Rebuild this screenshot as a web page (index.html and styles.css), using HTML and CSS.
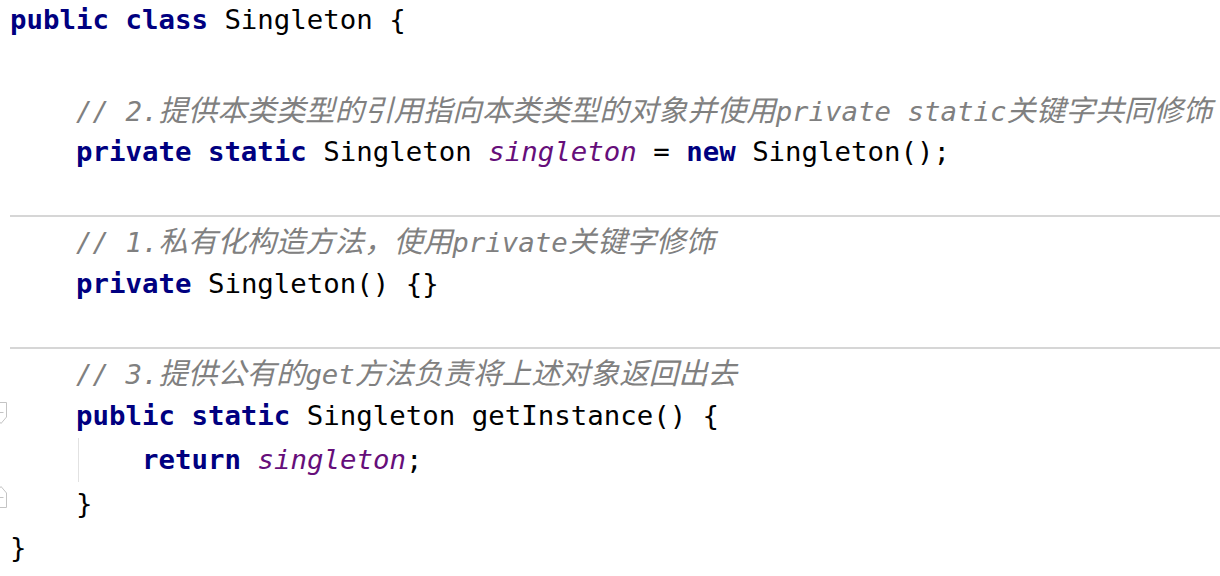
FILE: index.html
```html
<!DOCTYPE html>
<html lang="zh">
<head>
<meta charset="utf-8">
<title>Singleton</title>
<link rel="stylesheet" href="styles.css">
</head>
<body>
<div class="editor">
  <div class="line"><span class="gutter"></span><span class="code"><span class="kw">public class</span> Singleton {</span></div>
  <div class="line"><span class="gutter"></span><span class="code"> </span></div>
  <div class="line"><span class="gutter"></span><span class="code">    <span class="cm">// 2.<span class="zh">提供本类类型的引用指向本类类型的对象并使用</span>private static<span class="zh">关键字共同修饰</span></span></span></div>
  <div class="line"><span class="gutter"></span><span class="code">    <span class="kw">private static</span> Singleton <span class="fld">singleton</span> = <span class="kw">new</span> Singleton();</span></div>
  <div class="line short"><span class="gutter"></span><span class="code"> </span></div>
  <div class="line sep"><span class="gutter"></span><span class="code">    <span class="cm">// 1.<span class="zh">私有化构造方法，使用</span>private<span class="zh">关键字修饰</span></span></span></div>
  <div class="line"><span class="gutter"></span><span class="code">    <span class="kw">private</span> Singleton() {}</span></div>
  <div class="line short"><span class="gutter"></span><span class="code"> </span></div>
  <div class="line sep"><span class="gutter"></span><span class="code">    <span class="cm">// 3.<span class="zh">提供公有的</span>get<span class="zh">方法负责将上述对象返回出去</span></span></span></div>
  <div class="line"><span class="gutter"><svg class="fold" width="14" height="24" viewBox="0 0 14 24"><path d="M0.5 0.5 H11.5 V15 L6 21.5 L0.5 15 Z" fill="#fff" stroke="#c4c4c4" stroke-width="1"/><path d="M3.5 10.5 H8.5" stroke="#c4c4c4" stroke-width="1"/></svg></span><span class="code">    <span class="kw">public static</span> Singleton getInstance() {</span></div>
  <div class="line"><span class="gutter"></span><span class="code"><span class="ind">    </span><span class="guide">    </span><span class="kw">return</span> <span class="fld">singleton</span>;</span></div>
  <div class="line"><span class="gutter"><svg class="fold up" width="14" height="24" viewBox="0 0 14 24"><path d="M0.5 23.5 H11.5 V9 L6 2.5 L0.5 9 Z" fill="#fff" stroke="#c4c4c4" stroke-width="1"/><path d="M3.5 13.5 H8.5" stroke="#c4c4c4" stroke-width="1"/></svg></span><span class="code">    }</span></div>
  <div class="line"><span class="gutter"></span><span class="code">}</span></div>
</div>
</body>
</html>
```

FILE: styles.css
```css
html, body {
  margin: 0;
  padding: 0;
  background: #ffffff;
}

body {
  width: 1220px;
  height: 576px;
  overflow: hidden;
}

.editor {
  margin-top: -2px;
  display: flex;
  flex-direction: column;
  font-family: "DejaVu Sans Mono", "Noto Sans CJK SC", monospace;
  font-size: 27.4px;
  line-height: 44px;
  color: #000000;
}

.line {
  display: flex;
  height: 44px;
  align-items: flex-start;
}

.line.short {
  height: 41px;
}

.line.sep {
  height: 45px;
  border-top: 2px solid #d6d6d6;
  margin-left: 10px;
}

.line.sep .gutter {
  width: 0;
}

.gutter {
  width: 10px;
  flex: none;
  position: relative;
  height: 44px;
}

.fold {
  position: absolute;
  left: -5px;
  top: 8px;
}

.fold.up {
  top: 2px;
}

.code {
  white-space: pre;
  flex: none;
}

.kw {
  color: #000080;
  font-weight: bold;
}

.fld {
  color: #660e7a;
  font-style: italic;
}

.cm {
  color: #808080;
  font-style: italic;
  vertical-align: 2px;
}

.zh {
  font-family: "Noto Sans CJK SC", sans-serif;
  font-size: 29.4px;
}

.ind {
  display: inline-block;
  width: 66px;
  height: 44px;
  vertical-align: top;
}

.guide {
  display: inline-block;
  width: 66px;
  height: 44px;
  vertical-align: top;
  background: linear-gradient(#e2e2e2, #e2e2e2) no-repeat 2px 0 / 1px 100%;
}
```
